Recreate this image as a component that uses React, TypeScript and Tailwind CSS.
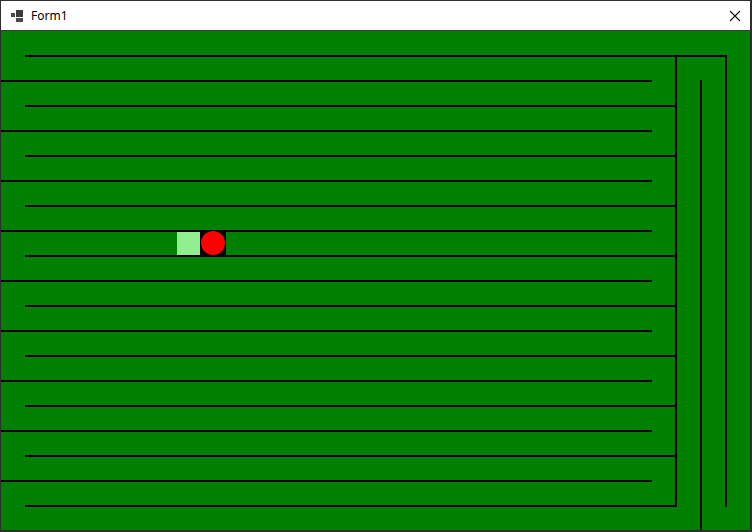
import React from "react";

const OX = 1;
const OY = 31;

function Maze() {
  const rects: { x: number; y: number; w: number; h: number }[] = [];
  // top line
  rects.push({ x: 25, y: 55, w: 702, h: 2 });
  for (let k = 1; k <= 18; k++) {
    const y = 55 + 25 * k;
    if (k % 2 === 1) {
      rects.push({ x: 0, y, w: 652, h: 2 });
    } else {
      rects.push({ x: 25, y, w: 652, h: 2 });
    }
  }
  // verticals
  rects.push({ x: 675, y: 55, w: 2, h: 452 });
  rects.push({ x: 700, y: 80, w: 2, h: 452 });
  rects.push({ x: 725, y: 55, w: 2, h: 452 });

  return (
    <svg width={749} height={499} viewBox="0 0 749 499" className="block" shapeRendering="crispEdges">
      <g transform={`translate(${-OX},${-OY})`}>
        {rects.map((r, i) => (
          <rect key={i} x={r.x} y={r.y} width={r.w} height={r.h} fill="#000" />
        ))}
        <rect x={177} y={232} width={23} height={23} fill="#90EE90" />
        <rect x={200} y={230} width={26} height={26} fill="#000" />
        <circle cx={213} cy={243} r={12} fill="#FF0000" shapeRendering="auto" />
      </g>
    </svg>
  );
}

export default function App() {
  return (
    <div className="w-[752px] h-[532px] flex flex-col border-t border-l border-r-2 border-b-2 border-[#2e2e2e] bg-white overflow-hidden">
      <div className="h-[29px] flex items-center bg-white shrink-0 border-b border-[#3a3a3a] box-content">
        <svg width="12" height="12" viewBox="0 0 12 12" className="ml-[10px] mt-[1px]" shapeRendering="crispEdges">
          <rect x="5" y="0" width="7" height="7" fill="#3c3c3c" />
          <rect x="0" y="3" width="4" height="4" fill="#4a4a4a" />
          <rect x="5" y="8" width="7" height="4" fill="#4a4a4a" />
        </svg>
        <span
          className="ml-[8px] text-[12px] leading-none text-black"
          style={{ fontFamily: '"Segoe UI", "Noto Sans", sans-serif' }}
        >
          Form1
        </span>
        <div className="flex-1" />
        <svg width="12" height="12" viewBox="0 0 12 12" className="mr-[9px]">
          <path d="M1 1 L11 11 M11 1 L1 11" stroke="#111" strokeWidth="1.1" fill="none" />
        </svg>
      </div>
      <div className="flex-1 bg-[#008000]">
        <Maze />
      </div>
    </div>
  );
}
